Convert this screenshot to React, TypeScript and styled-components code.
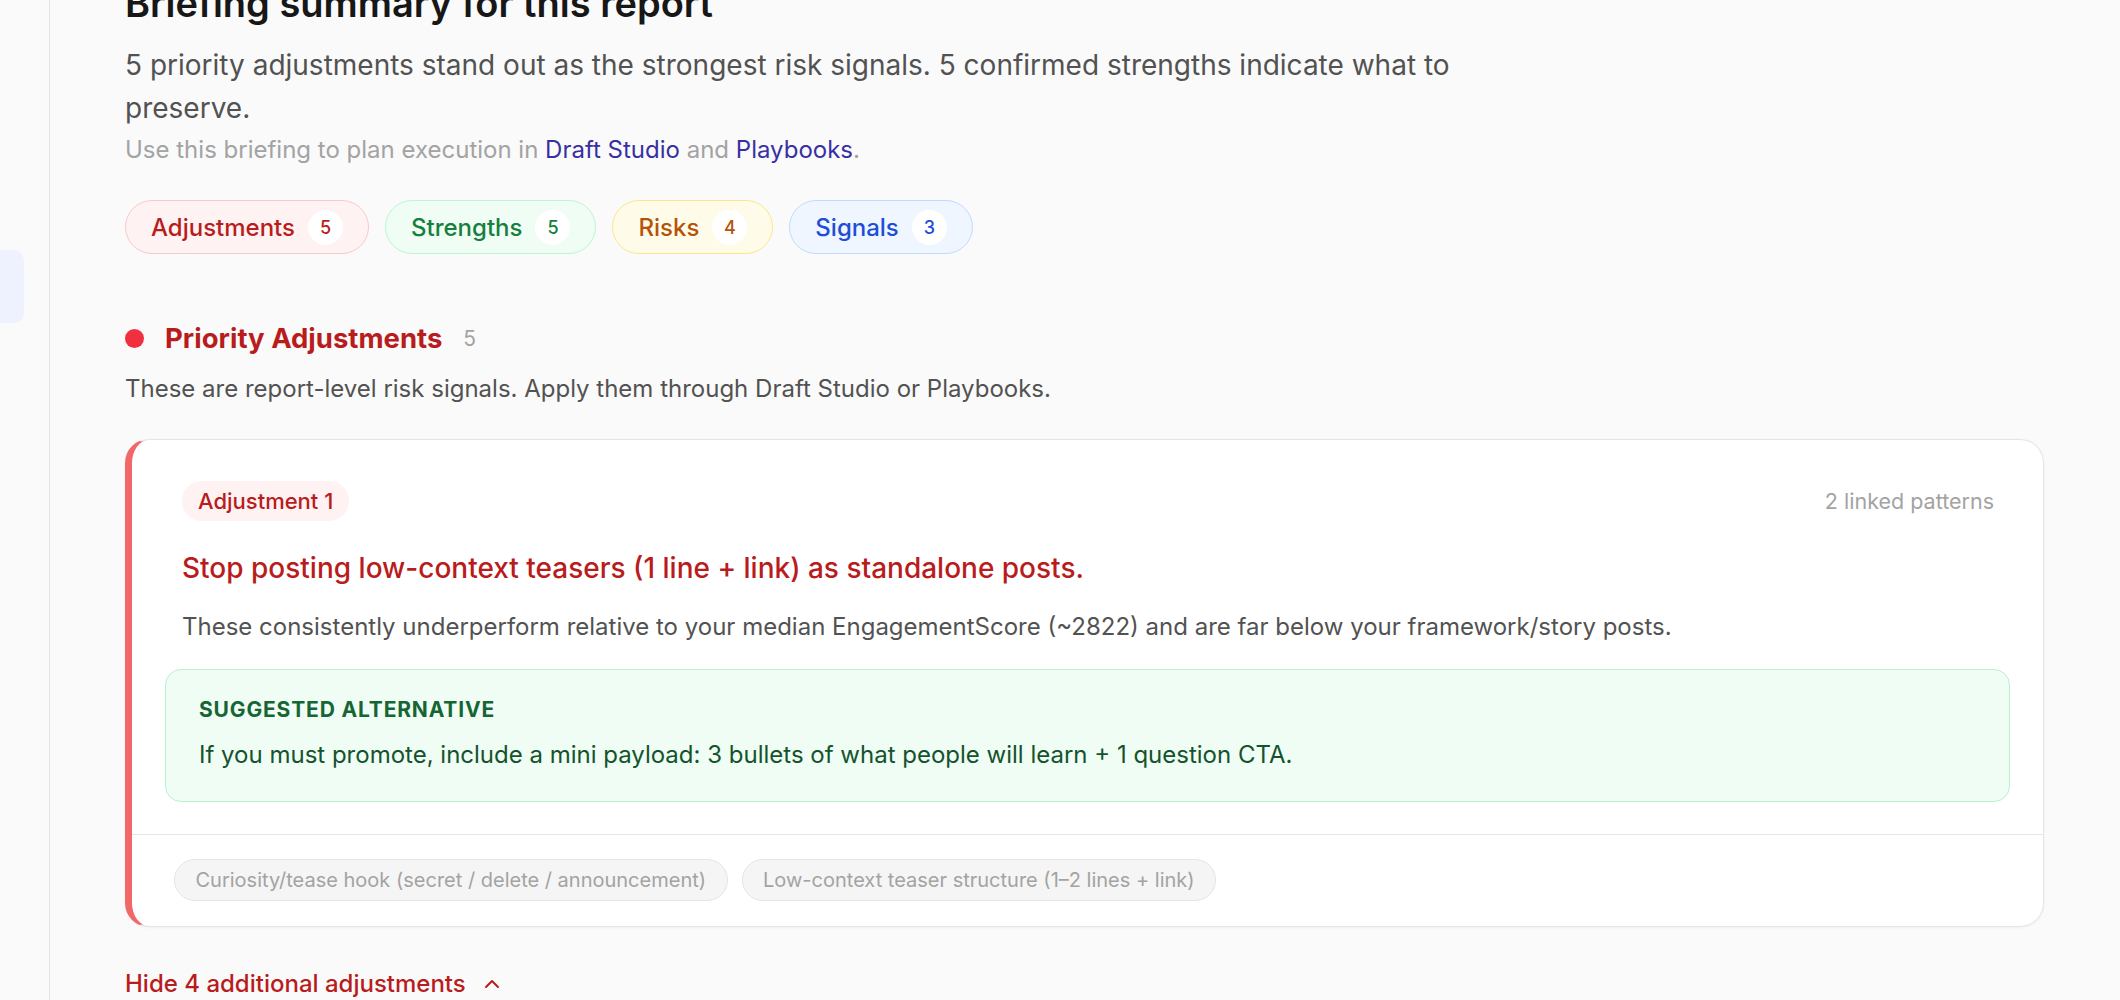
import React from "react";
import styled, { createGlobalStyle } from "styled-components";

const Global = createGlobalStyle`
  html, body { margin: 0; padding: 0; background: #fafafa; }
  body { font-family: Inter, "Noto Sans", "Liberation Sans", sans-serif; -webkit-font-smoothing: antialiased; }
  #root { min-height: 1000px; }
`;

const Layout = styled.div`
  display: flex;
  width: 2120px;
  height: 1000px;
  overflow: hidden;
  background: #fafafa;
`;

const Sidebar = styled.aside`
  flex: 0 0 50px;
  border-right: 1.5px solid #e4e4e4;
  background: #fafafa;
  padding-top: 250px;
  box-sizing: border-box;
`;

const NavActive = styled.div`
  width: 24px;
  height: 73px;
  background: #eef2fe;
  border-radius: 0 11px 11px 0;
`;

const Main = styled.main`
  flex: 1;
  padding: 0 76px 0 75px;
  box-sizing: border-box;
  min-width: 0;
`;

const Title = styled.h1`
  margin: -21px 0 0;
  font-size: 38px;
  line-height: 48px;
  font-weight: 600;
  color: #171717;
`;

const Lead = styled.p`
  margin: 16.5px 0 0;
  max-width: 1420px;
  font-size: 28px;
  line-height: 43px;
  color: #525252;
`;

const Note = styled.p`
  margin: 3.5px 0 0;
  font-size: 24px;
  line-height: 34px;
  color: #a3a3a3;
`;

const NoteLink = styled.a`
  color: #3730a3;
  text-decoration: none;
`;

const PillRow = styled.div`
  display: flex;
  gap: 16px;
  margin-top: 33px;
`;

const tones = {
  red: { bg: "#fef2f2", border: "#fac9c9", fg: "#b91c1c" },
  green: { bg: "#f0fdf4", border: "#bbf7d0", fg: "#15803d" },
  amber: { bg: "#fefce8", border: "#fde68a", fg: "#b45309" },
  blue: { bg: "#eff6ff", border: "#bfdbfe", fg: "#1d4ed8" },
} as const;

type Tone = keyof typeof tones;

const Pill = styled.button<{ $tone: Tone }>`
  display: inline-flex;
  align-items: center;
  gap: 13px;
  height: 54px;
  padding: 0 25px;
  box-sizing: border-box;
  border-radius: 999px;
  border: 1.5px solid ${(p) => tones[p.$tone].border};
  background: ${(p) => tones[p.$tone].bg};
  color: ${(p) => tones[p.$tone].fg};
  font-family: inherit;
  font-size: 24px;
  font-weight: 500;
`;

const PillCount = styled.span`
  display: inline-flex;
  align-items: center;
  justify-content: center;
  width: 35px;
  height: 35px;
  border-radius: 50%;
  background: #ffffff;
  font-size: 18px;
  font-weight: 500;
`;

const SectionHead = styled.div`
  display: flex;
  align-items: center;
  margin-top: 66px;
  height: 36px;
`;

const Dot = styled.span`
  width: 19px;
  height: 19px;
  border-radius: 50%;
  background: #f0303f;
  margin-right: 21px;
  flex: none;
`;

const SectionTitle = styled.h2`
  margin: 0;
  font-size: 27.5px;
  font-weight: 700;
  color: #b91c1c;
`;

const SectionCount = styled.span`
  margin-left: 21px;
  font-size: 21px;
  color: #a3a3a3;
`;

const SectionDesc = styled.p`
  margin: 16px 0 0;
  font-size: 24px;
  line-height: 34px;
  color: #525252;
`;

const Card = styled.article`
  margin-top: 33px;
  background: #ffffff;
  border: 1.5px solid #e5e5e5;
  border-left: 7px solid #f26868;
  border-radius: 24px;
  box-shadow: 0 1px 3px rgba(0, 0, 0, 0.04);
  overflow: hidden;
`;

const CardBody = styled.div`
  padding: 40.5px 33px 32px;
`;

const CardText = styled.div`
  padding: 0 16px 0 17px;
`;

const CardTop = styled.div`
  display: flex;
  align-items: center;
  justify-content: space-between;
`;

const Badge = styled.span`
  display: inline-flex;
  align-items: center;
  height: 40px;
  padding: 0 16px;
  border-radius: 999px;
  background: #fef2f2;
  color: #b91c1c;
  font-size: 22px;
  font-weight: 500;
`;

const Meta = styled.span`
  font-size: 21.5px;
  color: #a3a3a3;
`;

const CardTitle = styled.h3`
  margin: 27px 0 0;
  font-size: 28px;
  line-height: 40px;
  font-weight: 500;
  color: #b91c1c;
`;

const CardDesc = styled.p`
  margin: 21px 0 0;
  font-size: 24px;
  line-height: 36px;
  color: #525252;
`;

const AltBox = styled.div`
  margin-top: 24px;
  padding: 28.5px 33px 27.5px;
  border: 1.5px solid #bbf0d0;
  background: #effdf4;
  border-radius: 16px;
`;

const AltLabel = styled.div`
  font-size: 21px;
  line-height: 24px;
  font-weight: 700;
  letter-spacing: 0.04em;
  text-transform: uppercase;
  color: #166534;
`;

const AltText = styled.p`
  margin: 15px 0 0;
  font-size: 24px;
  line-height: 36px;
  color: #14532d;
`;

const CardFoot = styled.div`
  display: flex;
  gap: 14px;
  padding: 24.5px 42px 25px;
  border-top: 1.5px solid #e5e5e5;
`;

const Chip = styled.span`
  display: inline-flex;
  align-items: center;
  height: 42px;
  padding: 0 20.5px;
  box-sizing: border-box;
  border-radius: 999px;
  border: 1.5px solid #e5e5e5;
  background: #f5f5f5;
  color: #a3a3a3;
  font-size: 20px;
`;

const ToggleLink = styled.button`
  display: inline-flex;
  align-items: center;
  gap: 18px;
  margin-top: 40px;
  padding: 0;
  border: none;
  background: none;
  color: #b91c1c;
  font-family: inherit;
  font-size: 24px;
  line-height: 34px;
  font-weight: 500;
`;

const pills: { label: string; count: number; tone: Tone }[] = [
  { label: "Adjustments", count: 5, tone: "red" },
  { label: "Strengths", count: 5, tone: "green" },
  { label: "Risks", count: 4, tone: "amber" },
  { label: "Signals", count: 3, tone: "blue" },
];

export default function App() {
  return (
    <>
      <Global />
      <Layout>
        <Sidebar>
          <NavActive />
        </Sidebar>
        <Main>
          <Title>Briefing summary for this report</Title>
          <Lead>
            5 priority adjustments stand out as the strongest risk signals. 5 confirmed strengths indicate what to
            preserve.
          </Lead>
          <Note>
            Use this briefing to plan execution in <NoteLink>Draft Studio</NoteLink> and{" "}
            <NoteLink>Playbooks</NoteLink>.
          </Note>
          <PillRow>
            {pills.map((p) => (
              <Pill key={p.label} $tone={p.tone}>
                {p.label}
                <PillCount>{p.count}</PillCount>
              </Pill>
            ))}
          </PillRow>
          <SectionHead>
            <Dot />
            <SectionTitle>Priority Adjustments</SectionTitle>
            <SectionCount>5</SectionCount>
          </SectionHead>
          <SectionDesc>These are report-level risk signals. Apply them through Draft Studio or Playbooks.</SectionDesc>
          <Card>
            <CardBody>
              <CardText>
                <CardTop>
                  <Badge>Adjustment 1</Badge>
                  <Meta>2 linked patterns</Meta>
                </CardTop>
                <CardTitle>Stop posting low-context teasers (1 line + link) as standalone posts.</CardTitle>
                <CardDesc>
                  These consistently underperform relative to your median EngagementScore (~2822) and are far below
                  your framework/story posts.
                </CardDesc>
              </CardText>
              <AltBox>
                <AltLabel>Suggested alternative</AltLabel>
                <AltText>
                  If you must promote, include a mini payload: 3 bullets of what people will learn + 1 question CTA.
                </AltText>
              </AltBox>
            </CardBody>
            <CardFoot>
              <Chip>Curiosity/tease hook (secret / delete / announcement)</Chip>
              <Chip>Low-context teaser structure (1–2 lines + link)</Chip>
            </CardFoot>
          </Card>
          <ToggleLink>
            Hide 4 additional adjustments
            <svg width="16" height="10" viewBox="0 0 16 10" fill="none" stroke="currentColor" strokeWidth="2" strokeLinecap="round" strokeLinejoin="round">
              <path d="M2 8 8 2 14 8" />
            </svg>
          </ToggleLink>
        </Main>
      </Layout>
    </>
  );
}
